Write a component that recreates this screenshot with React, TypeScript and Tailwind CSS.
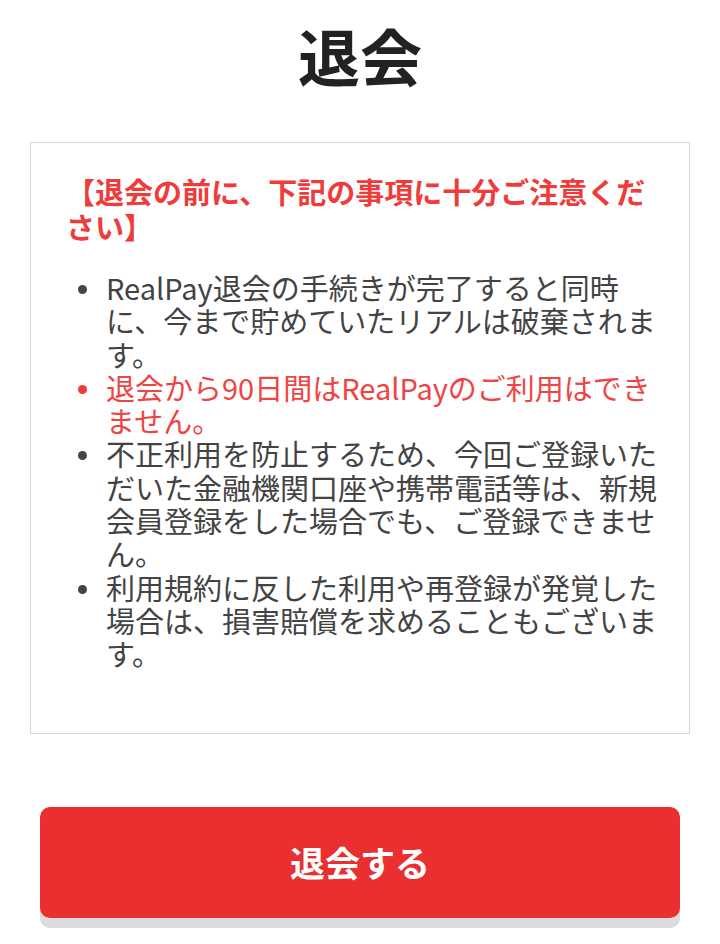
import React from "react";

const notes: { text: string; warn?: boolean }[] = [
  { text: "RealPay退会の手続きが完了すると同時に、今まで貯めていたリアルは破棄されます。" },
  { text: "退会から90日間はRealPayのご利用はできません。", warn: true },
  {
    text: "不正利用を防止するため、今回ご登録いただいた金融機関口座や携帯電話等は、新規会員登録をした場合でも、ご登録できません。",
  },
  { text: "利用規約に反した利用や再登録が発覚した場合は、損害賠償を求めることもございます。" },
];

const App = () => {
  return (
    <div
      className="min-h-[944px] bg-white pt-[24px]"
      style={{ fontFamily: '"Noto Sans CJK JP", "Noto Sans", sans-serif' }}
    >
      <h1 className="text-center text-[62px] leading-none font-bold text-[#222222]">退会</h1>

      <div className="mx-[30px] mt-[56px] border border-[#d6d6d6] bg-white pt-[31px] pb-[62px] pl-[35px] pr-[23px]">
        <p className="text-[29px] leading-[35px] font-bold text-[#f03b3b]">
          【退会の前に、下記の事項に十分ご注意ください】
        </p>
        <ul className="mt-[27px]">
          {notes.map((n, i) => (
            <li key={i} className="flex">
              <span className="block w-[40px] shrink-0 pt-[14px] pl-[12px]">
                <span
                  className={`block h-[9px] w-[9px] rounded-full ${n.warn ? "bg-[#f03b3b]" : "bg-[#444444]"}`}
                />
              </span>
              <span
                className={`text-[29px] leading-[33.3px] ${n.warn ? "text-[#f04343]" : "text-[#434343]"}`}
              >
                {n.text}
              </span>
            </li>
          ))}
        </ul>
      </div>

      <div className="mx-[40px] mt-[73px]">
        <button className="flex h-[111px] w-full items-center justify-center rounded-[10px] bg-[#e92f2f] text-[35px] font-bold text-white shadow-[0_10px_0_#dcdcdc]">
          退会する
        </button>
      </div>
    </div>
  );
};

export default App;
